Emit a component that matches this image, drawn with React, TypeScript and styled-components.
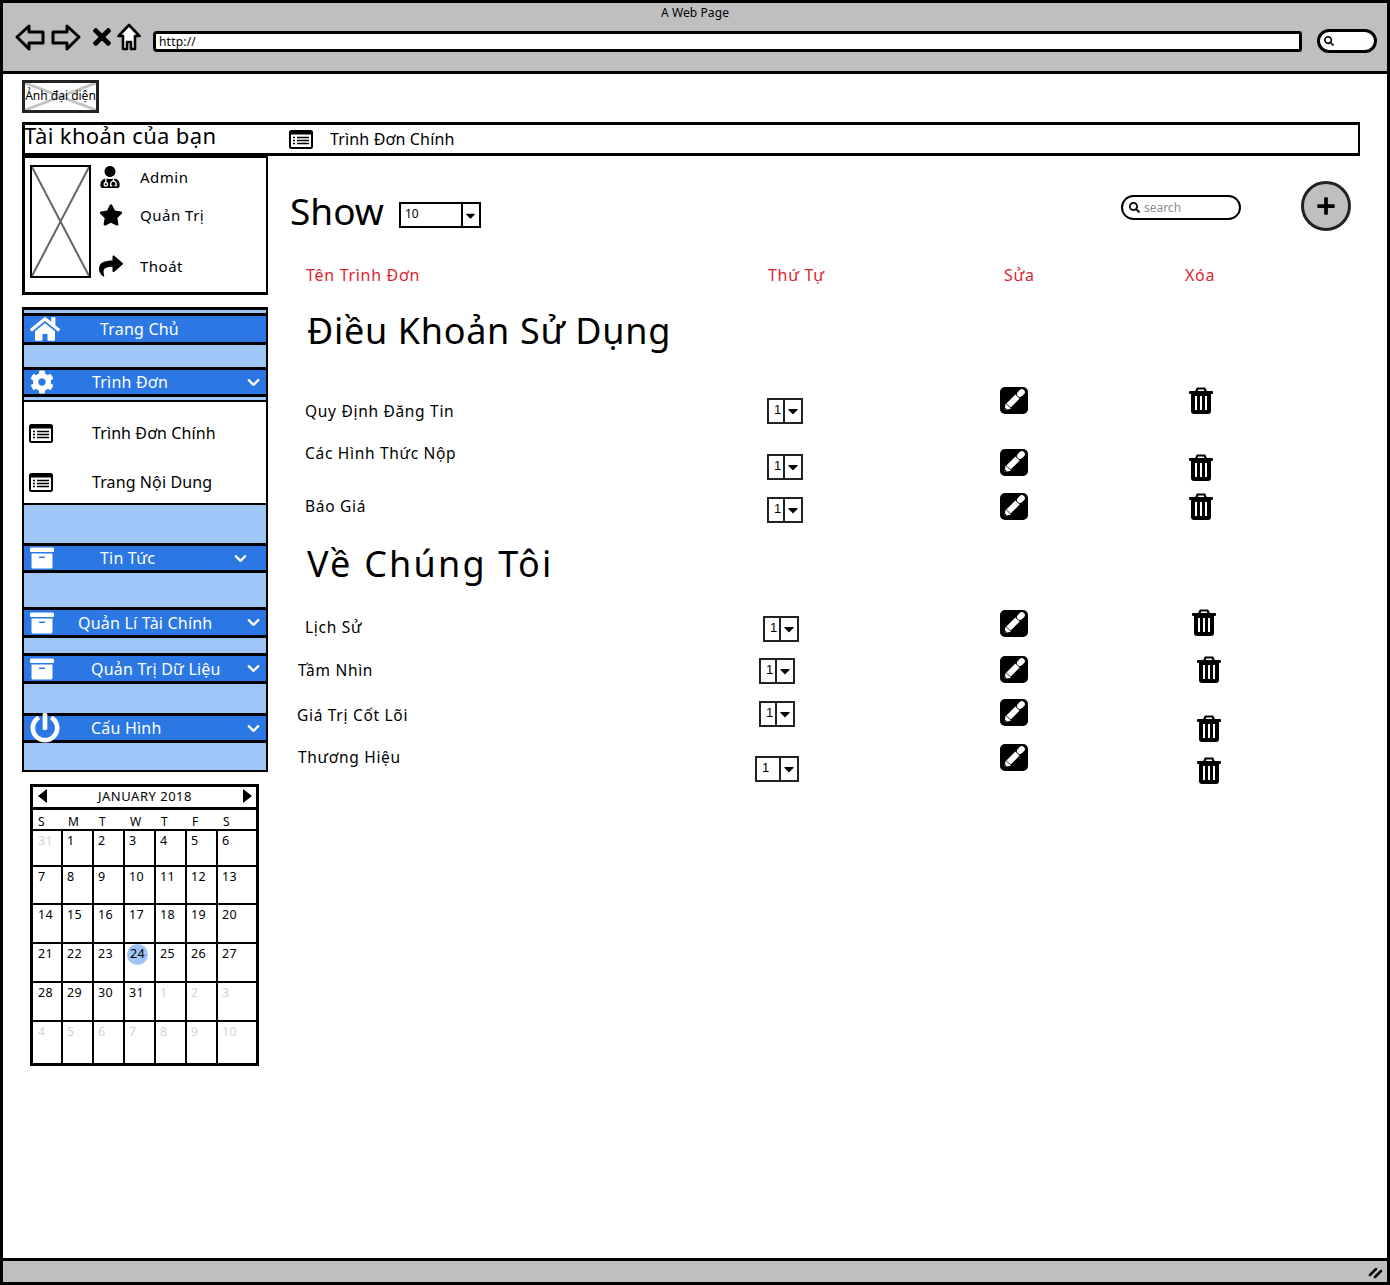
import React from 'react'
import styled, { createGlobalStyle } from 'styled-components'
import {
  FaArchive,
  FaCaretDown,
  FaCog,
  FaHome,
  FaPlus,
  FaPowerOff,
  FaSearch,
  FaShare,
  FaStar,
  FaTimes,
  FaUserMd,
} from 'react-icons/fa'
import { FiChevronDown } from 'react-icons/fi'

const GlobalStyle = createGlobalStyle`
  html, body { margin: 0; padding: 0; background: #fff; }
  * { box-sizing: border-box; }
  body { font-family: "Noto Sans", "Open Sans", sans-serif; color: #000; }
`

const Window = styled.div`
  width: 1390px;
  height: 1285px;
  border: 3px solid #000;
  display: flex;
  flex-direction: column;
  overflow: hidden;
`
const TopBar = styled.header`
  height: 71px;
  flex: none;
  background: #bfbfbf;
  border-bottom: 3px solid #000;
  display: flex;
  flex-direction: column;
`
const PageTitle = styled.div`
  font-size: 12px;
  line-height: 16px;
  text-align: center;
  margin-top: 2px;
  letter-spacing: 0.1px;
`
const NavRow = styled.div`
  display: flex;
  align-items: center;
  height: 30px;
  margin-top: 1px;
  padding-left: 12px;
`
const BackSvg = styled.svg<{ $flip?: boolean }>`
  flex: none;
  transform: ${(p) => (p.$flip ? 'scaleX(-1)' : 'none')};
  margin-left: ${(p) => (p.$flip ? 6 : 0)}px;
`
const CloseIcon = styled(FaTimes)`
  flex: none;
  font-size: 26px;
  margin-left: 8px;
`
const HomeSvg = styled.svg`
  flex: none;
  margin-left: 2px;
`
const UrlBox = styled.div`
  width: 1149px;
  height: 21px;
  margin: 8px 0 0 12px;
  border: 3px solid #000;
  border-radius: 4px 3px 3px 4px;
  background: #fff;
  font-size: 12px;
  line-height: 15px;
  padding-left: 3px;
  letter-spacing: 0.2px;
`
const TopSearch = styled.div`
  width: 60px;
  height: 24px;
  margin: 7px 0 0 15px;
  border: 3px solid #000;
  border-radius: 12px;
  background: #fff;
  display: flex;
  align-items: center;
  padding-left: 4px;
  font-size: 10px;
`
const Body = styled.div`
  flex: 1;
  padding: 6px 0 0 19px;
  display: flex;
  flex-direction: column;
`
const AvatarBox = styled.div`
  position: relative;
  width: 77px;
  height: 33px;
  border: 3px solid #222;
  display: flex;
  align-items: center;
  justify-content: center;
  background: #fff;
`
const CrossLines = styled.svg`
  position: absolute;
  inset: 0;
  width: 100%;
  height: 100%;
`
const AvatarLabel = styled.span`
  position: relative;
  font-size: 12px;
  margin-top: -2px;
  white-space: nowrap;
  text-shadow: 0 0 2px #fff;
`
const AccountBar = styled.div`
  width: 1338px;
  height: 34px;
  margin-top: 9px;
  border: 3px solid #000;
  border-right-width: 2px;
  display: flex;
  align-items: center;
`
const AccountTitle = styled.div`
  width: 265px;
  font-size: 22px;
  line-height: 26px;
  margin: -8px 0 0 -1px;
  letter-spacing: 0.35px;
`
const BarLabel = styled.div`
  font-size: 16px;
  margin-left: 17px;
  letter-spacing: 0.15px;
`
const Columns = styled.div`
  display: flex;
  margin-top: -1px;
`
const Sidebar = styled.aside`
  width: 246px;
  flex: none;
  display: flex;
  flex-direction: column;
`
const AccountCard = styled.div`
  height: 140px;
  border: 3px solid #000;
  border-right-width: 2px;
  display: flex;
  padding: 7px 0 0 5px;
`
const PhotoBox = styled.div`
  position: relative;
  width: 61px;
  height: 113px;
  border: 2px solid #000;
`
const AccountList = styled.div`
  margin-left: 8px;
  display: flex;
  flex-direction: column;
`
const AccountRow = styled.div<{ $h: number }>`
  height: ${(p) => p.$h}px;
  display: flex;
  align-items: center;
  font-size: 15px;
  letter-spacing: 0.5px;
`
const AccountIcon = styled.span`
  width: 41px;
  display: flex;
  align-items: center;
  font-size: 24px;
`
const Menu = styled.nav`
  margin-top: 12px;
  height: 465px;
  border: 2px solid #000;
  border-width: 3px 2px 2px;
  background: #9fc4f6;
  display: flex;
  flex-direction: column;
`
const Spacer = styled.div<{ $h: number }>`
  height: ${(p) => p.$h}px;
  flex: none;
`
const MenuHead = styled.div<{ $h: number }>`
  height: ${(p) => p.$h}px;
  flex: none;
  margin: 0 -2px;
  background: #2b78e4;
  border: 3px solid #000;
  border-width: 3px 2px;
  color: #fff;
  font-size: 16px;
  letter-spacing: 0.2px;
  display: flex;
  align-items: center;
`
const MenuIcon = styled.span<{ $size: number }>`
  width: 8px;
  margin-left: 6px;
  display: flex;
  align-items: center;
  font-size: ${(p) => p.$size}px;
  flex: none;
  & svg { flex: none; }
`
const MenuLabel = styled.span<{ $x: number }>`
  margin-left: ${(p) => p.$x}px;
  white-space: nowrap;
`
const Chevron = styled.span<{ $right: number }>`
  margin-left: auto;
  margin-right: ${(p) => p.$right}px;
  display: flex;
  font-size: 19px;
  & svg { stroke-width: 2.8; }
`
const SubMenu = styled.div`
  height: 105px;
  flex: none;
  margin: 3px -2px 0;
  padding-top: 10px;
  background: #fff;
  border: 2px solid #000;
  display: flex;
  flex-direction: column;
  justify-content: center;
  gap: 17px;
`
const SubRow = styled.div`
  height: 32px;
  display: flex;
  align-items: center;
  padding-left: 5px;
  font-size: 16px;
  letter-spacing: 0.1px;
`
const SubLabel = styled.span`
  margin-left: 39px;
`
const Calendar = styled.div`
  width: 229px;
  height: 282px;
  margin: 12px 0 0 8px;
  border: 3px solid #000;
  display: flex;
  flex-direction: column;
`
const CalHead = styled.div`
  height: 23px;
  flex: none;
  border-bottom: 3px solid #000;
  display: flex;
  align-items: center;
  justify-content: space-between;
  font-size: 13px;
  letter-spacing: 0.5px;
  padding: 0 4px 2px 5px;
`
const CalArrow = styled.span<{ $right?: boolean }>`
  width: 0;
  height: 0;
  border-style: solid;
  border-width: 7px 0 7px 9px;
  border-color: transparent transparent transparent #000;
  transform: ${(p) => (p.$right ? 'none' : 'scaleX(-1)')};
`
const CalGrid = styled.div`
  display: grid;
  grid-template-columns: 28px repeat(5, 31px) 1fr;
`
const DayName = styled.div`
  height: 19px;
  font-size: 12px;
  line-height: 23px;
  padding-left: 7px;
  &:first-child { padding-left: 5px; }
`
const CalCell = styled.div<{ $h: number; $first: boolean; $muted: boolean }>`
  height: ${(p) => p.$h}px;
  border-top: 2px solid #000;
  border-left: ${(p) => (p.$first ? '0' : '2px solid #000')};
  padding: 1px 0 0 ${(p) => (p.$first ? 5 : 4)}px;
  font-size: 12.5px;
  letter-spacing: 0.3px;
  line-height: 17px;
  color: ${(p) => (p.$muted ? '#d4d4d4' : '#000')};
`
const Today = styled.span`
  display: inline-block;
  width: 21px;
  height: 21px;
  margin: -1px 0 0 -2px;
  border-radius: 50%;
  background: #9fc4f6;
  text-align: center;
  line-height: 20px;
`
const Main = styled.main`
  width: 1117px;
  margin-left: 2px;
  display: flex;
  flex-direction: column;
`
const Toolbar = styled.div`
  height: 110px;
  display: flex;
  align-items: flex-start;
  padding-left: 20px;
`
const ShowLabel = styled.div`
  font-size: 37px;
  line-height: 48px;
  margin-top: 32px;
`
const ShowSelect = styled.div`
  width: 82px;
  height: 26px;
  margin: 47px 0 0 15px;
  border: 2px solid #000;
  display: flex;
  font-size: 12px;
  line-height: 19px;
`
const SelectValue = styled.span`
  flex: 1;
  padding-left: 4px;
`
const SelectArrow = styled.span`
  width: 18px;
  border-left: 2px solid #000;
  display: flex;
  align-items: center;
  justify-content: center;
  font-size: 15px;
`
const SearchBox = styled.div`
  width: 120px;
  height: 25px;
  margin: 40px 0 0 640px;
  border: 2px solid #000;
  border-radius: 13px;
  display: flex;
  align-items: center;
  padding: 0 0 1px 6px;
  gap: 4px;
  font-size: 12px;
  color: #8a8a94;
  & svg { color: #000; font-size: 11px; margin-top: 1px; }
`
const AddButton = styled.div`
  width: 50px;
  height: 50px;
  margin: 26px 0 0 60px;
  border: 3px solid #222;
  border-radius: 50%;
  background: #bfbfbf;
  display: flex;
  align-items: center;
  justify-content: center;
  font-size: 20px;
`
const TableRow = styled.div<{ $h: number }>`
  height: ${(p) => p.$h}px;
  display: grid;
  grid-template-columns: 480px 240px 190px 1fr;
  align-items: start;
`
const Cell = styled.div<{ $x: number; $y: number }>`
  margin: ${(p) => p.$y}px 0 0 ${(p) => p.$x}px;
  font-size: 15.5px;
  line-height: 20px;
  letter-spacing: 0.7px;
`
const HeadCell = styled(Cell)`
  color: #db2431;
  font-size: 16px;
  letter-spacing: 0.7px;
`
const GroupTitle = styled.h2<{ $h: number; $ls: number }>`
  margin: 0;
  height: ${(p) => p.$h}px;
  padding-left: 37px;
  font-weight: 400;
  font-size: 36px;
  line-height: ${(p) => (p.$h > 50 ? 52 : 48)}px;
  letter-spacing: ${(p) => p.$ls}px;
`
const OrderSelect = styled.div<{ $w: number }>`
  width: ${(p) => p.$w}px;
  height: 26px;
  margin-top: -1px;
  border: 2px solid #222;
  display: flex;
  font-family: "Liberation Sans", sans-serif;
  font-size: 13px;
  line-height: 20px;
  letter-spacing: 0;
`
const OrderValue = styled.span`
  flex: 1;
  padding-left: 5px;
`
const OrderArrow = styled.span`
  width: 18px;
  border-left: 2px solid #222;
  display: flex;
  align-items: center;
  justify-content: center;
  font-size: 16px;
`
const Footer = styled.footer`
  height: 24px;
  flex: none;
  background: #bfbfbf;
  border-top: 3px solid #000;
  display: flex;
  align-items: center;
  justify-content: flex-end;
  padding-right: 3px;
`

const BackIcon = ({ flip }: { flip?: boolean }) => (
  <BackSvg $flip={flip} width="30" height="28" viewBox="0 0 30 28">
    <path d="M2 14 14 3v6h14v11H14v6z" fill="none" stroke="#000" strokeWidth="3" strokeLinejoin="round" />
  </BackSvg>
)

const HomeOutline = () => (
  <HomeSvg width="24" height="28" viewBox="0 0 24 28">
    <path d="M1.500 13 12 2l10.500 11H18v13h-4v-7h-4v7H6V13z" fill="#fff" stroke="#000" strokeWidth="2.600" strokeLinejoin="round" />
  </HomeSvg>
)

const ListIcon = () => (
  <svg width="24" height="19" viewBox="0 0 24 19">
    <rect x="1" y="1" width="22" height="17" rx="1.500" fill="#fff" stroke="#000" strokeWidth="2" />
    <rect x="1" y="1" width="22" height="3.500" fill="#000" />
    <path d="M4 7.500h2M8 7.500h12M4 10.500h2M8 10.500h12M4 13.500h2M8 13.500h12" stroke="#000" strokeWidth="1.600" />
  </svg>
)

const PenIcon = () => (
  <svg width="28" height="27" viewBox="0 0 28 27">
    <rect width="28" height="27" rx="5" fill="#000" />
    <path d="M8.500 18.500 17.500 9.500" stroke="#fff" strokeWidth="6" />
    <path d="M4.500 23 5.600 16.400 11 21.800z" fill="#fff" />
    <path d="M20 7 21.800 5.200" stroke="#fff" strokeWidth="6" strokeLinecap="round" />
    <path d="M4.500 23 5 20.500 7 22.500z" fill="#000" />
  </svg>
)

const TrashIcon = () => (
  <svg width="24" height="27" viewBox="0 0 24 27">
    <path d="M7 5 8.500 1.500h7L17 5" fill="none" stroke="#000" strokeWidth="2.200" />
    <rect x="0" y="4" width="24" height="3" rx="1" fill="#000" />
    <path d="M2 6h20v18q0 3-3 3H5q-3 0-3-3z" fill="#000" />
    <path d="M7 9v14M12 9v14M17 9v14" stroke="#fff" strokeWidth="2" />
  </svg>
)

const GrayCross = ({ color, width }: { color: string; width: number }) => (
  <CrossLines viewBox="0 0 100 100" preserveAspectRatio="none">
    <path d="M0 0 100 100M100 0 0 100" stroke={color} strokeWidth={width} vectorEffect="non-scaling-stroke" />
  </CrossLines>
)

type Place = [number, number]
type RowData = {
  t: number
  h: number
  name: string
  text: Place
  select: Place
  w?: number
  pen: number
  trash: Place
}

const group1: RowData[] = [
  { t: 385, h: 58, name: 'Quy Định Đăng Tin', text: [35, 16], select: [17, 14], pen: 2, trash: [9, 2] },
  { t: 443, h: 50, name: 'Các Hình Thức Nộp', text: [35, 0], select: [17, 12], pen: 6, trash: [9, 11] },
  { t: 493, h: 47, name: 'Báo Giá', text: [35, 3], select: [17, 5], pen: 0, trash: [9, 0] },
]
const group2: RowData[] = [
  { t: 590, h: 65, name: 'Lịch Sử', text: [35, 27], select: [13, 27], pen: 20, trash: [12, 19] },
  { t: 655, h: 43, name: 'Tầm Nhìn', text: [28, 5], select: [9, 4], pen: 1, trash: [17, 1] },
  { t: 698, h: 45, name: 'Giá Trị Cốt Lõi', text: [27, 7], select: [9, 4], pen: 1, trash: [17, 17] },
  { t: 743, h: 45, name: 'Thương Hiệu', text: [28, 4], select: [5, 14], w: 44, pen: 1, trash: [17, 14] },
]

const ItemRow = ({ row }: { row: RowData }) => (
  <TableRow $h={row.h}>
    <Cell $x={row.text[0]} $y={row.text[1]}>{row.name}</Cell>
    <Cell $x={row.select[0]} $y={row.select[1]}>
      <OrderSelect $w={row.w ?? 36}>
        <OrderValue>1</OrderValue>
        <OrderArrow><FaCaretDown /></OrderArrow>
      </OrderSelect>
    </Cell>
    <Cell $x={10} $y={row.pen}><PenIcon /></Cell>
    <Cell $x={row.trash[0]} $y={row.trash[1]}><TrashIcon /></Cell>
  </TableRow>
)

const dayNames = ['S', 'M', 'T', 'W', 'T', 'F', 'S']
const weeks: { h: number; days: number[] }[] = [
  { h: 36, days: [31, 1, 2, 3, 4, 5, 6] },
  { h: 38, days: [7, 8, 9, 10, 11, 12, 13] },
  { h: 39, days: [14, 15, 16, 17, 18, 19, 20] },
  { h: 39, days: [21, 22, 23, 24, 25, 26, 27] },
  { h: 39, days: [28, 29, 30, 31, 1, 2, 3] },
  { h: 43, days: [4, 5, 6, 7, 8, 9, 10] },
]

const App = () => {
  return (
    <>
      <GlobalStyle />
      <Window>
        <TopBar>
          <PageTitle>A Web Page</PageTitle>
          <NavRow>
            <BackIcon />
            <BackIcon flip />
            <CloseIcon />
            <HomeOutline />
            <UrlBox>http://</UrlBox>
            <TopSearch><FaSearch /></TopSearch>
          </NavRow>
        </TopBar>
        <Body>
          <AvatarBox>
            <GrayCross color="#c4c4c4" width={3} />
            <AvatarLabel>Ảnh đại diện</AvatarLabel>
          </AvatarBox>
          <AccountBar>
            <AccountTitle>Tài khoản của bạn</AccountTitle>
            <ListIcon />
            <BarLabel>Trình Đơn Chính</BarLabel>
          </AccountBar>
          <Columns>
            <Sidebar>
              <AccountCard>
                <PhotoBox><GrayCross color="#666" width={2} /></PhotoBox>
                <AccountList>
                  <AccountRow $h={24}>
                    <AccountIcon><FaUserMd size={22} /></AccountIcon>Admin
                  </AccountRow>
                  <AccountRow $h={52}>
                    <AccountIcon><FaStar /></AccountIcon>Quản Trị
                  </AccountRow>
                  <AccountRow $h={52}>
                    <AccountIcon><FaShare /></AccountIcon>Thoát
                  </AccountRow>
                </AccountList>
              </AccountCard>
              <Menu>
                <Spacer $h={3} />
                <MenuHead $h={32}>
                  <MenuIcon $size={30}><FaHome /></MenuIcon>
                  <MenuLabel $x={62}>Trang Chủ</MenuLabel>
                </MenuHead>
                <Spacer $h={22} />
                <MenuHead $h={30}>
                  <MenuIcon $size={24}><FaCog /></MenuIcon>
                  <MenuLabel $x={54}>Trình Đơn</MenuLabel>
                  <Chevron $right={3}><FiChevronDown /></Chevron>
                </MenuHead>
                <SubMenu>
                  <SubRow><ListIcon /><SubLabel>Trình Đơn Chính</SubLabel></SubRow>
                  <SubRow><ListIcon /><SubLabel>Trang Nội Dung</SubLabel></SubRow>
                </SubMenu>
                <Spacer $h={38} />
                <MenuHead $h={30}>
                  <MenuIcon $size={24}><FaArchive /></MenuIcon>
                  <MenuLabel $x={62}>Tin Tức</MenuLabel>
                  <Chevron $right={16}><FiChevronDown /></Chevron>
                </MenuHead>
                <Spacer $h={34} />
                <MenuHead $h={31}>
                  <MenuIcon $size={24}><FaArchive /></MenuIcon>
                  <MenuLabel $x={40}>Quản Lí Tài Chính</MenuLabel>
                  <Chevron $right={3}><FiChevronDown /></Chevron>
                </MenuHead>
                <Spacer $h={15} />
                <MenuHead $h={31}>
                  <MenuIcon $size={24}><FaArchive /></MenuIcon>
                  <MenuLabel $x={53}>Quản Trị Dữ Liệu</MenuLabel>
                  <Chevron $right={3}><FiChevronDown /></Chevron>
                </MenuHead>
                <Spacer $h={29} />
                <MenuHead $h={30}>
                  <MenuIcon $size={30}><FaPowerOff /></MenuIcon>
                  <MenuLabel $x={53}>Cấu Hình</MenuLabel>
                  <Chevron $right={3}><FiChevronDown /></Chevron>
                </MenuHead>
              </Menu>
              <Calendar>
                <CalHead>
                  <CalArrow />
                  JANUARY 2018
                  <CalArrow $right />
                </CalHead>
                <CalGrid>
                  {dayNames.map((d, i) => (
                    <DayName key={i}>{d}</DayName>
                  ))}
                  {weeks.map((week, w) =>
                    week.days.map((day, i) => {
                      const muted = (w === 0 && day > 7) || (w === 4 && day < 7) || w === 5
                      return (
                        <CalCell key={`${w}-${i}`} $h={week.h} $first={i === 0} $muted={muted}>
                          {day === 24 ? <Today>24</Today> : day}
                        </CalCell>
                      )
                    })
                  )}
                </CalGrid>
              </Calendar>
            </Sidebar>
            <Main>
              <Toolbar>
                <ShowLabel>Show</ShowLabel>
                <ShowSelect>
                  <SelectValue>10</SelectValue>
                  <SelectArrow><FaCaretDown /></SelectArrow>
                </ShowSelect>
                <SearchBox><FaSearch />search</SearchBox>
                <AddButton><FaPlus /></AddButton>
              </Toolbar>
              <TableRow $h={40}>
                <HeadCell $x={36} $y={0}>Tên Trình Đơn</HeadCell>
                <HeadCell $x={18} $y={0}>Thứ Tự</HeadCell>
                <HeadCell $x={14} $y={0}>Sửa</HeadCell>
                <HeadCell $x={5} $y={0}>Xóa</HeadCell>
              </TableRow>
              <GroupTitle $h={80} $ls={0.67}>Điều Khoản Sử Dụng</GroupTitle>
              {group1.map((row) => (
                <ItemRow key={row.name} row={row} />
              ))}
              <GroupTitle $h={50} $ls={2.2}>Về Chúng Tôi</GroupTitle>
              {group2.map((row) => (
                <ItemRow key={row.name} row={row} />
              ))}
            </Main>
          </Columns>
        </Body>
        <Footer>
          <svg width="16" height="14" viewBox="0 0 16 14">
            <path d="M2 10 8 4M7 12l6-6" stroke="#000" strokeWidth="2.500" strokeLinecap="round" />
          </svg>
        </Footer>
      </Window>
    </>
  )
}

export default App
